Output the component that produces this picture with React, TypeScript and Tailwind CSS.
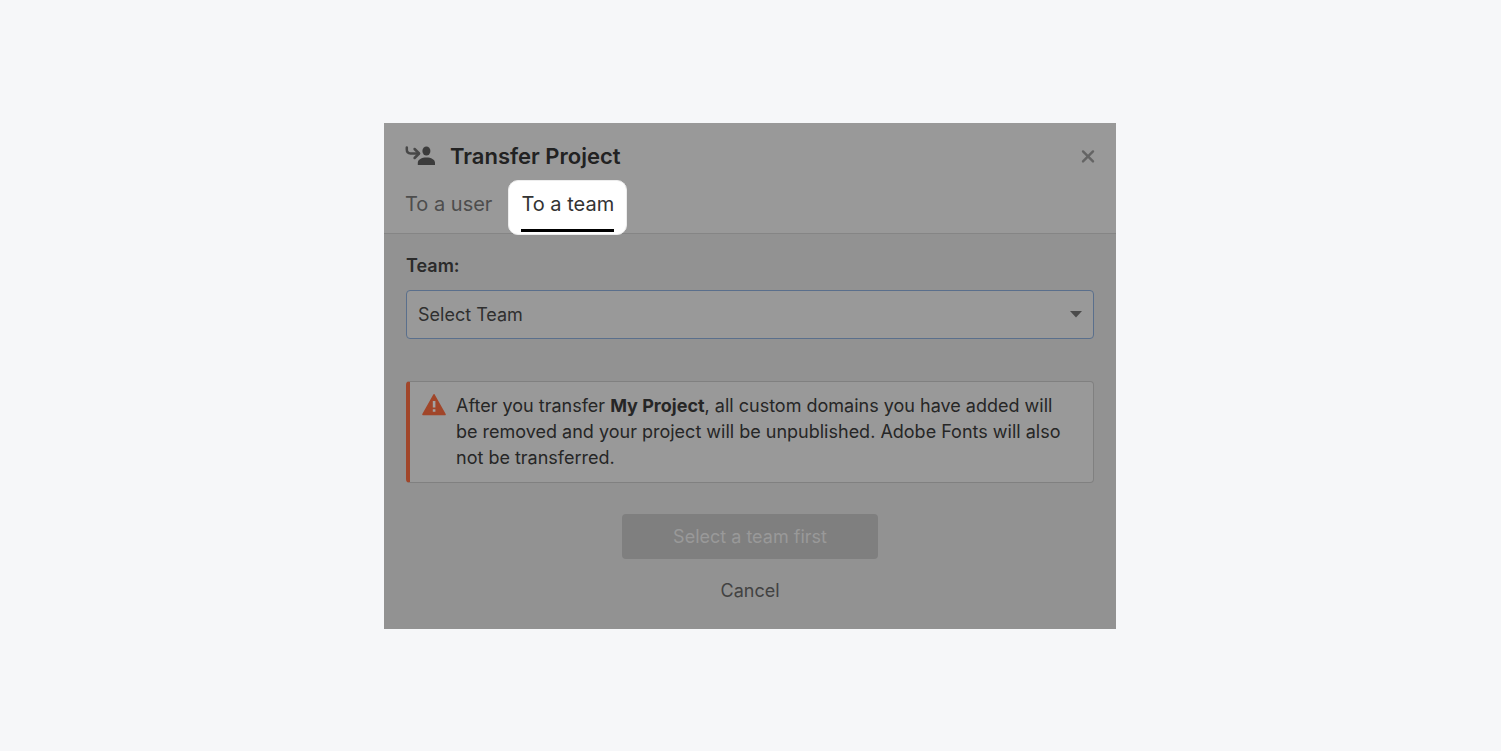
const TransferIcon = () => {
  return (
    <svg className="w-8 h-6" viewBox="0 0 32 24" fill="none" aria-hidden="true">
      <path
        d="M2.8 3.4v2.2c0 2.6 1.2 3.9 3.8 3.9h8"
        stroke="#484848"
        strokeWidth="2.5"
        strokeLinecap="round"
      />
      <path
        d="M10.6 5l4.5 4.5-4.5 4.5"
        stroke="#484848"
        strokeWidth="2.5"
        strokeLinecap="round"
        strokeLinejoin="round"
      />
      <ellipse cx="22.4" cy="7" rx="4" ry="4.6" fill="#3c3c3c" />
      <path
        d="M13.8 21v-2.2c0-3.4 3.9-5.4 8.6-5.4s8.6 2 8.6 5.4v2.2z"
        fill="#3c3c3c"
      />
    </svg>
  );
};

const CloseIcon = () => {
  return (
    <svg className="w-4 h-4" viewBox="0 0 16 16" fill="none" aria-hidden="true">
      <path
        d="M3 3.4l10 10M13 3.4l-10 10"
        stroke="#646464"
        strokeWidth="2.4"
        strokeLinecap="round"
      />
    </svg>
  );
};

const WarningIcon = () => {
  return (
    <svg className="w-6 h-6 shrink-0" viewBox="0 0 24 24" aria-hidden="true">
      <path
        d="M12 1.8L23 21.5H1z"
        fill="#a1462a"
        stroke="#a1462a"
        strokeWidth="1.6"
        strokeLinejoin="round"
      />
      <path d="M10.8 8h2.6v6.5h-2.6zM10.8 16.2h2.6v2.6h-2.6z" fill="#a3a3a3" />
    </svg>
  );
};

export default function App() {
  return (
    <main className="min-h-screen bg-[#f6f7f9] py-[123px] pr-px font-['Inter',sans-serif]">
      <section
        aria-labelledby="title"
        className="mx-auto w-full max-w-[732px] bg-[#929292] text-[#2b2b2b]"
      >
        {/* Header */}
        <header className="bg-[#999999] border-b border-[#858585] pt-4">
          <div className="flex items-center justify-between pl-5 pr-5">
            <div className="flex items-center gap-3">
              <TransferIcon />
              <h1
                id="title"
                className="pl-0.5 text-[22px] leading-[34px] font-semibold text-[#222222]"
              >
                Transfer Project
              </h1>
            </div>
            <button aria-label="Close" className="cursor-pointer">
              <CloseIcon />
            </button>
          </div>

          {/* Tabs */}
          <nav className="mt-[7px] -mb-0.5 flex h-[55px] pl-[21px] text-xl leading-6">
            <a href="#user" className="mr-4 pt-3 text-[#4d4d4d]">
              To a user
            </a>
            <a
              href="#team"
              aria-current="page"
              className="rounded-[10px] border border-[#ededed] bg-white px-3 pt-[11px] text-[#333333]"
            >
              <span className="block h-10 border-b-[3px] border-black">
                To a team
              </span>
            </a>
          </nav>
        </header>

        {/* Body */}
        <form className="px-[22px] pt-5 pb-[26px] text-lg">
          <label htmlFor="team" className="block leading-6 font-semibold">
            Team:
          </label>
          <div className="relative mt-3">
            <select
              id="team"
              className="block h-[49px] w-full appearance-none rounded border border-[#5a6f8c] bg-[#999999] pl-[11px] text-[#2f2f2f] outline-none"
            >
              <option>Select Team</option>
            </select>
            <svg
              className="pointer-events-none absolute top-[21px] right-3 h-[7px] w-3"
              viewBox="0 0 12 7"
              aria-hidden="true"
            >
              <path d="M0 0h12L6 6.5z" fill="#4b4b4b" />
            </svg>
          </div>

          {/* Warning */}
          <div className="mt-[42px] flex gap-[10px] rounded border border-l-4 border-[#808080] border-l-[#a1462a] bg-[#999999] pt-[11px] pr-5 pb-[11px] pl-3">
            <WarningIcon />
            <p className="leading-[26px] text-[#262626]">
              After you transfer <strong className="font-bold">My Project</strong>
              , all custom domains you have added will be removed and your
              project will be unpublished. Adobe Fonts will also not be
              transferred.
            </p>
          </div>

          <div className="mt-[31px] flex flex-col items-center">
            <button
              type="button"
              disabled
              className="h-[45px] w-[256px] rounded bg-[#7f7f7f] text-[#999999]"
            >
              Select a team first
            </button>
            <button
              type="button"
              className="mt-5 cursor-pointer leading-6 text-[#424242]"
            >
              Cancel
            </button>
          </div>
        </form>
      </section>
    </main>
  );
}
